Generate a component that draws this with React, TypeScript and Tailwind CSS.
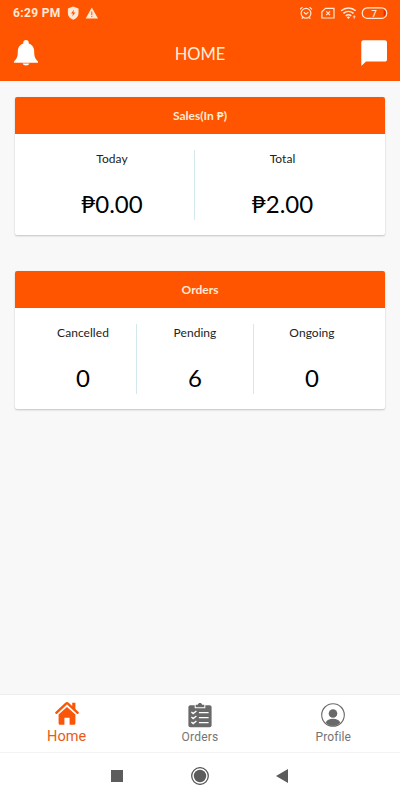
import React from 'react';

const lato = "font-['Lato','Noto_Sans',sans-serif]";
const roboto = "font-['Roboto',sans-serif]";

function StatusBar() {
  return (
    <div className={`flex h-[25px] items-center pl-[13px] pr-[12px] text-[#ffe9d6] ${roboto}`}>
      <span className="w-[54px] whitespace-nowrap text-[12px] font-bold leading-[14px] tracking-[0.35px]">6:29 PM</span>
      <svg className="h-[14px] w-[31px]" viewBox="0 0 31 14">
        <path d="M6.200 .5 11.500 2.500v4.700c0 3.200-2.200 5.300-5.300 6.500C3.100 12.500 .9 10.400 .9 7.200V2.500Z" fill="currentColor" />
        <path d="M6.900 3.800 4 7.500h1.900l-.5 3 3-3.900H6.500Z" fill="#ff5500" />
        <path d="M24.800 1.400 31 12.500H18.700Z" fill="currentColor" />
        <path d="M24.300 5.500h1v3.800h-1zM24.300 10h1v1h-1z" fill="#ff5500" />
      </svg>
      <svg className="ml-auto h-[14px] w-[88px]" viewBox="0 0 88 14" fill="none" stroke="currentColor" strokeWidth="1.200">
        <circle cx="6" cy="7.300" r="4.900" />
        <path d="M3.900 6.300 6 8.200l2.300-1.900M0 3.400 2.500 1.100M12 3.400 9.500 1.100M2.700 11.500l-1 1.200M9.300 11.500l1 1.200" />
        <path d="M25.500 2.400H34v9.600H21.900V5.700Z" />
        <path d="m26.200 5.400 3.800 3.700m0-3.700-3.800 3.700" strokeWidth="1.300" />
        <path d="M41.200 4.800c4.300-3.900 10.300-3.900 14.500 0M43.400 7.400c3-2.700 7.100-2.700 10.100 0M45.700 9.900c1.700-1.500 3.900-1.500 5.600 0" strokeWidth="1.500" />
        <path d="m46.700 11.200 1.700 1.800 1.700-1.800q-1.700-1.200-3.400 0Z" fill="currentColor" stroke="none" />
        <path d="M52.800 10.800h2.800M54.200 9.300v3.500" strokeWidth=".8" />
        <rect x="62.300" y="1.800" width="24.400" height="10.600" rx="5" />
        <path d="M83.600 3.600c1.600.8 2.100 2 2.100 3.500s-.5 2.700-2.100 3.500Z" fill="#e62b00" stroke="none" />
        <text x="74.300" y="10.500" textAnchor="middle" fontSize="9.500" fontWeight="500" fill="currentColor" stroke="none">7</text>
      </svg>
    </div>
  );
}

function Header() {
  return (
    <header className="h-[81px] bg-[#ff5500]">
      <StatusBar />
      <div className="flex h-[56px] items-center justify-between px-[13px]">
        <svg className="h-[26px] w-[26px]" viewBox="0 0 26 26" fill="#fff">
          <path d="M13 0c-1.700 0-2.700 1-2.700 2.500v.9C6.500 4.700 4.800 7.700 4.800 11.400c0 5.200-1 7.400-3.800 10v1.400h24v-1.400c-2.800-2.600-3.800-4.800-3.800-10 0-3.700-1.700-6.700-5.500-8v-.9C15.700 1 14.700 0 13 0ZM9.600 23.600h6.800c-.5 1.200-1.600 1.900-3.400 1.900s-2.900-.7-3.400-1.900Z" />
        </svg>
        <h1 className={`pt-[1px] text-[16.500px] leading-5 text-[#ffeedc] ${lato}`}>HOME</h1>
        <svg className="h-[26px] w-[26px]" viewBox="0 0 26 26" fill="#fff">
          <path d="M2.500.3h21.300c1.300 0 2.200.9 2.200 2.200v16.900c0 1.300-.9 2.200-2.200 2.200H5L.3 26V2.500C.3 1.200 1.200.3 2.500.3Z" />
        </svg>
      </div>
    </header>
  );
}

type Stat = { label: string; value: string };

function StatCard({ title, stats, columns }: { title: string; stats: Stat[]; columns: string }) {
  return (
    <section className="h-[138px] overflow-hidden rounded-[2px] bg-white shadow-[0_1px_2px_rgba(0,0,0,0.22)]">
      <h2 className="flex h-[37px] items-center justify-center bg-[#ff5500] text-[12px] font-bold leading-[14px] text-[#ffebd6]">{title}</h2>
      <div className={`mx-[15px] mt-[16px] grid h-[70px] divide-x divide-[#d4e8f0] ${columns}`}>
        {stats.map((s) => (
          <div key={s.label} className="flex flex-col items-center text-black">
            <span className="mt-[1px] text-[12px] leading-[16px] tracking-[0.05px] text-[#222]">{s.label}</span>
            <span className="mt-[22px] text-[24px] leading-[30px]">{s.value}</span>
          </div>
        ))}
      </div>
    </section>
  );
}

function HomeIcon() {
  return (
    <svg className="h-[26px] w-[26px]" viewBox="0 0 26 26">
      <path d="M4.600 14.600 13 7l8.400 7.600v8.700c0 .9-.6 1.500-1.500 1.500h-4.300v-7h-5.200v7H6.100c-.9 0-1.500-.6-1.500-1.500Z" fill="#fa5608" />
      <path d="M2.300 12.800 12.100 3.700q.9-.8 1.800 0l9.800 9.100" fill="none" stroke="#fff" strokeWidth="4.200" />
      <path d="M2.300 12.800 12.100 3.700q.9-.8 1.800 0l9.800 9.100" fill="none" stroke="#fa5608" strokeWidth="2.400" strokeLinecap="round" />
      <path d="M18.200 2.800h3.200v7.700l-3.200-3Z" fill="#fa5608" />
    </svg>
  );
}

function OrdersIcon() {
  return (
    <svg className="h-[26px] w-[26px]" viewBox="0 0 26 26">
      <path d="M3.400 3.300h4.300v3h10.600v-3h4.300c1.200 0 2 .8 2 2v17.900c0 1.200-.8 2-2 2H3.400c-1.200 0-2-.8-2-2V5.300c0-1.200.8-2 2-2Z" fill="#696969" />
      <path d="M8.700 5.200V2.800h2.100c.3-1.300 1.100-1.900 2.200-1.900s1.900.6 2.200 1.900h2.100v2.400Z" fill="#696969" />
      <path d="m4.400 10 1.800 1.600 3.200-2.500M4.400 15l1.800 1.600 3.200-2.500M4.400 20l1.800 1.600 3.200-2.500M11.900 10.600h9.700M11.900 15.600h9.700M11.900 20.600h9.700" fill="none" stroke="#fff" strokeWidth="1.300" />
    </svg>
  );
}

function ProfileIcon() {
  return (
    <svg className="h-[26px] w-[26px]" viewBox="0 0 26 26">
      <circle cx="13" cy="13" r="11.300" fill="#fff" stroke="#696969" strokeWidth="1.100" />
      <circle cx="13" cy="11.500" r="4.300" fill="#696969" />
      <path d="M5.700 20.600c1.200-2.600 3.800-3.800 7.300-3.800s6.100 1.200 7.300 3.800c-1.900 2.200-4.500 3.400-7.300 3.400s-5.400-1.200-7.300-3.400Z" fill="#696969" />
    </svg>
  );
}

function BottomTabs() {
  return (
    <nav className={`grid h-[58px] grid-cols-3 border-t border-[#eeeeee] bg-white ${roboto}`}>
      <div className="flex flex-col items-center pt-[5px] text-[#e85a18]">
        <HomeIcon />
        <span className="mt-[2px] text-[14.500px] leading-[18px] tracking-[0.100px]">Home</span>
      </div>
      <div className="flex flex-col items-center pt-[7px] text-[#747474]">
        <OrdersIcon />
        <span className="mt-[2px] text-[12px] leading-[15px] tracking-[0.2px]">Orders</span>
      </div>
      <div className="flex flex-col items-center pt-[7px] text-[#747474]">
        <ProfileIcon />
        <span className="mt-[2px] text-[12px] leading-[15px] tracking-[0.1px]">Profile</span>
      </div>
    </nav>
  );
}

function SystemBar() {
  return (
    <div className="flex h-[48px] items-center justify-between border-t border-[#f3f3f3] bg-white pb-[2px] pl-[111px] pr-[112px]">
      <span className="h-[12px] w-[12px] bg-[#5c5c5c]" />
      <svg className="h-[20px] w-[20px]" viewBox="0 0 20 20">
        <circle cx="10" cy="10" r="8.300" fill="none" stroke="#4c4c4c" strokeWidth="1.200" />
        <circle cx="10" cy="10" r="6.200" fill="#5c5c5c" />
      </svg>
      <svg className="h-[14px] w-[12px]" viewBox="0 0 12 14">
        <path d="M12 0v14L0 7Z" fill="#5c5c5c" />
      </svg>
    </div>
  );
}

export default function App() {
  return (
    <div className="flex h-[800px] w-[400px] flex-col overflow-hidden bg-[#f8f8f8]">
      <Header />
      <main className={`flex flex-1 flex-col gap-[36px] px-[15px] pt-[16px] ${lato}`}>
        <StatCard
          title="Sales(In ₱)"
          columns="grid-cols-[165px_175px]"
          stats={[
            { label: 'Today', value: '₱0.00' },
            { label: 'Total', value: '₱2.00' },
          ]}
        />
        <StatCard
          title="Orders"
          columns="grid-cols-[107px_117px_116px]"
          stats={[
            { label: 'Cancelled', value: '0' },
            { label: 'Pending', value: '6' },
            { label: 'Ongoing', value: '0' },
          ]}
        />
      </main>
      <BottomTabs />
      <SystemBar />
    </div>
  );
}
